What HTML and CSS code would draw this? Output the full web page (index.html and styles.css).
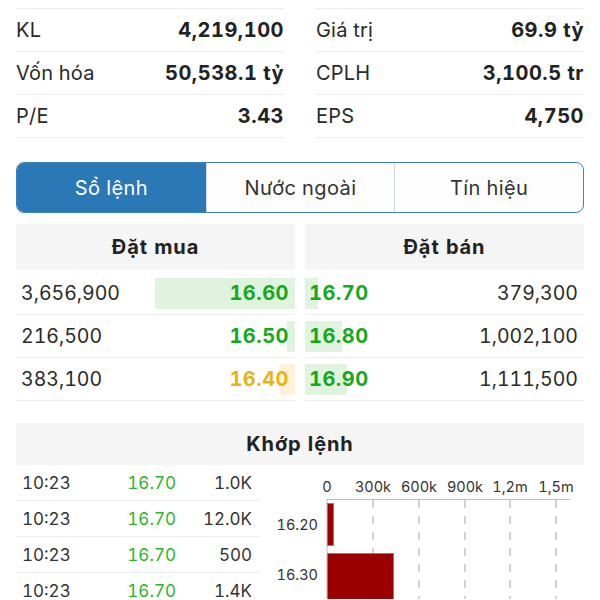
FILE: index.html
```html
<!DOCTYPE html>
<html lang="vi">
<head>
<meta charset="utf-8">
<title>Sổ lệnh</title>
<link rel="stylesheet" href="styles.css">
</head>
<body>
<div class="page">
  <section class="stats">
    <div class="stat-col">
      <div class="stat-row"><span class="lbl">KL</span><span class="val">4,219,100</span></div>
      <div class="stat-row"><span class="lbl">Vốn hóa</span><span class="val">50,538.1 tỷ</span></div>
      <div class="stat-row"><span class="lbl">P/E</span><span class="val">3.43</span></div>
    </div>
    <div class="stat-col">
      <div class="stat-row"><span class="lbl">Giá trị</span><span class="val">69.9 tỷ</span></div>
      <div class="stat-row"><span class="lbl">CPLH</span><span class="val">3,100.5 tr</span></div>
      <div class="stat-row"><span class="lbl">EPS</span><span class="val">4,750</span></div>
    </div>
  </section>

  <nav class="tabs">
    <div class="tab active">Sổ lệnh</div>
    <div class="tab">Nước ngoài</div>
    <div class="tab">Tín hiệu</div>
  </nav>

  <section class="book">
    <div class="side buy">
      <div class="side-head">Đặt mua</div>
      <div class="orow"><span class="bar" style="width:140px"></span><span class="qty">3,656,900</span><span class="px up">16.60</span></div>
      <div class="orow"><span class="bar" style="width:8px"></span><span class="qty">216,500</span><span class="px up">16.50</span></div>
      <div class="orow"><span class="bar ref" style="width:15px"></span><span class="qty">383,100</span><span class="px refc">16.40</span></div>
    </div>
    <div class="side sell">
      <div class="side-head">Đặt bán</div>
      <div class="orow"><span class="bar" style="width:13px"></span><span class="px up">16.70</span><span class="qty">379,300</span></div>
      <div class="orow"><span class="bar" style="width:37px"></span><span class="px up">16.80</span><span class="qty">1,002,100</span></div>
      <div class="orow"><span class="bar" style="width:42px"></span><span class="px up">16.90</span><span class="qty">1,111,500</span></div>
    </div>
  </section>

  <section class="match">
    <div class="match-head">Khớp lệnh</div>
    <div class="match-body">
      <div class="trades">
        <div class="trow"><span>10:23</span><span class="tp">16.70</span><span class="tv">1.0K</span></div>
        <div class="trow"><span>10:23</span><span class="tp">16.70</span><span class="tv">12.0K</span></div>
        <div class="trow"><span>10:23</span><span class="tp">16.70</span><span class="tv">500</span></div>
        <div class="trow"><span>10:23</span><span class="tp">16.70</span><span class="tv">1.4K</span></div>
      </div>
      <svg class="chart" width="324" height="134" viewBox="0 0 324 134">
        <g class="axis-labels">
          <text x="67" y="27" text-anchor="middle">0</text>
          <text x="113" y="27" text-anchor="middle">300k</text>
          <text x="159" y="27" text-anchor="middle">600k</text>
          <text x="205" y="27" text-anchor="middle">900k</text>
          <text x="250" y="27" text-anchor="middle">1,2m</text>
          <text x="296" y="27" text-anchor="middle">1,5m</text>
        </g>
        <g stroke="#c4c4c4" stroke-width="1.5" stroke-dasharray="8 8">
          <line x1="113" y1="35" x2="113" y2="134"/>
          <line x1="159" y1="35" x2="159" y2="134"/>
          <line x1="205" y1="35" x2="205" y2="134"/>
          <line x1="250" y1="35" x2="250" y2="134"/>
          <line x1="296" y1="35" x2="296" y2="134"/>
        </g>
        <line x1="67" y1="34.5" x2="310" y2="34.5" stroke="#bdbdbd" stroke-width="1"/>
        <line x1="67" y1="34" x2="67" y2="134" stroke="#bdbdbd" stroke-width="1"/>
        <rect x="67.5" y="38.5" width="6" height="42" fill="#9b0000" stroke="#e25a5a" stroke-width="1"/>
        <rect x="67.5" y="88.5" width="66" height="60" fill="#9b0000" stroke="#e25a5a" stroke-width="1"/>
        <g class="bar-labels">
          <text x="58" y="65" text-anchor="end">16.20</text>
          <text x="58" y="115" text-anchor="end">16.30</text>
        </g>
      </svg>
    </div>
  </section>
</div>
</body>
</html>
```

FILE: styles.css
```css
html, body {
  margin: 0;
  padding: 0;
  background: #ffffff;
}
body {
  height: 600px;
  overflow: hidden;
  font-family: "Inter", "Roboto", "Liberation Sans", sans-serif;
  font-variant-numeric: tabular-nums;
  color: #222222;
}
.page {
  padding: 8px 16px 0 16px;
}

/* stats */
.stats {
  display: grid;
  grid-template-columns: 1fr 1fr;
  column-gap: 32px;
}
.stat-col {
  border-top: 1px solid #ececec;
}
.stat-row {
  height: 42px;
  border-bottom: 1px solid #ececec;
  display: flex;
  align-items: center;
  justify-content: space-between;
  font-size: 20px;
  letter-spacing: 0.2px;
}
.lbl {
  color: #2a2a2a;
}
.val {
  font-weight: 700;
  color: #222;
  letter-spacing: 0.5px;
}

/* tabs */
.tabs {
  margin-top: 24px;
  height: 51px;
  display: grid;
  grid-template-columns: 1fr 1fr 1fr;
  border: 1.5px solid #3a82bb;
  border-radius: 8px;
  overflow: hidden;
  box-sizing: border-box;
  background: #fdfdfd;
}
.tab {
  display: flex;
  align-items: center;
  justify-content: center;
  font-size: 20px;
  letter-spacing: 0.4px;
  color: #333;
  border-left: 1px solid #cfd6dc;
}
.tab:first-child {
  border-left: none;
}
.tab.active {
  background: #2b78b6;
  color: #ffffff;
}

/* order book */
.book {
  margin-top: 11px;
  display: grid;
  grid-template-columns: 1fr 1fr;
  column-gap: 10px;
}
.side-head {
  height: 46px;
  background: #f5f5f5;
  display: flex;
  align-items: center;
  justify-content: center;
  font-weight: 700;
  font-size: 20px;
  letter-spacing: 0.9px;
  margin-bottom: 2px;
}
.orow {
  position: relative;
  height: 42px;
  border-bottom: 1px solid #efefef;
  display: flex;
  align-items: center;
  justify-content: space-between;
  font-size: 20px;
}
.buy .orow {
  padding: 0 6px 0 5px;
}
.sell .orow {
  padding: 0 6px 0 4px;
}
.bar {
  position: absolute;
  top: 6px;
  bottom: 5px;
  background: #dff3df;
}
.buy .bar {
  right: 0;
}
.sell .bar {
  left: 0;
}
.bar.ref {
  background: #fcf2dc;
}
.qty, .px {
  position: relative;
}
.qty {
  color: #2a2a2a;
  font-size: 19.5px;
}
.px {
  font-weight: 700;
  letter-spacing: 0.5px;
}
.up {
  color: #15a91c;
}
.refc {
  color: #e6b512;
}

/* matched orders */
.match {
  margin-top: 22px;
}
.match-head {
  height: 42px;
  background: #f5f5f5;
  display: flex;
  align-items: center;
  justify-content: center;
  font-weight: 700;
  font-size: 20px;
  letter-spacing: 0.9px;
}
.match-body {
  display: flex;
}
.trades {
  width: 244px;
  flex: none;
}
.trow {
  height: 35px;
  border-bottom: 1px solid #efefef;
  display: grid;
  grid-template-columns: 1fr 80px 76px;
  align-items: center;
  padding: 0 8px 0 6px;
  font-size: 17px;
  color: #333;
}
.tp {
  text-align: right;
  color: #2cb52c;
}
.tv {
  text-align: right;
}
.chart {
  display: block;
  flex: none;
}
.chart text {
  font-family: "Inter", "Roboto", "Liberation Sans", sans-serif;
  font-size: 14.5px;
  font-variant-numeric: tabular-nums;
  fill: #333;
}
```
